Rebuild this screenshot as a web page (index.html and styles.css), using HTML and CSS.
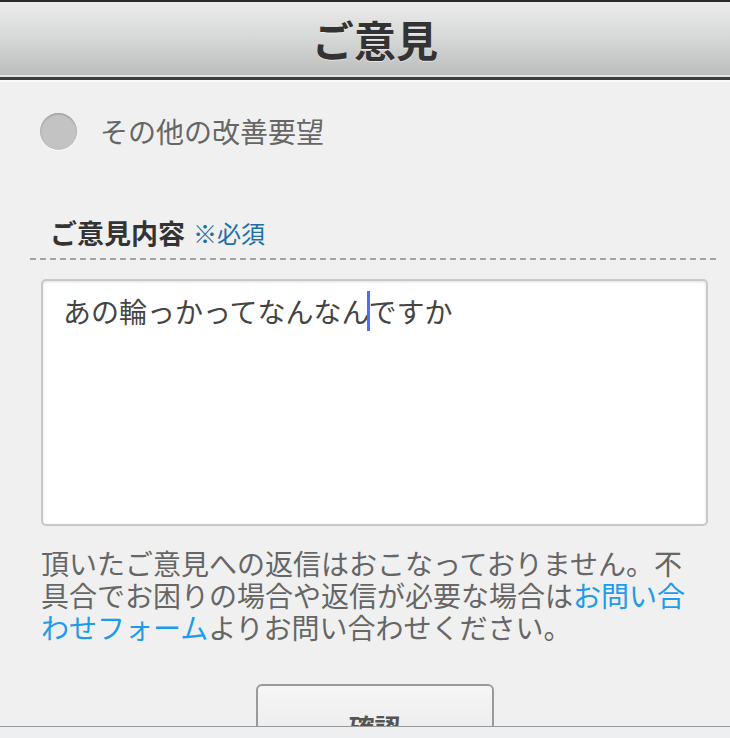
FILE: index.html
```html
<!DOCTYPE html>
<html lang="ja">
<head>
<meta charset="utf-8">
<title>ご意見</title>
<link rel="stylesheet" href="styles.css">
</head>
<body>
<header class="header">
  <h1 class="title">ご意見</h1>
</header>
<div class="rule rule-light"></div>
<div class="rule rule-dark"></div>
<div class="rule rule-white"></div>

<main class="main">
  <label class="option">
    <span class="radio"></span>
    <span class="option-text">その他の改善要望</span>
  </label>

  <div class="field-label">
    <span class="field-name">ご意見内容</span>
    <span class="required">※必須</span>
  </div>
  <div class="dashed"></div>

  <div class="content">
    <div class="textbox">
      <div class="textbox-text">あの輪っかってなんなん<span class="caret"></span>ですか</div>
    </div>
    <p class="note">頂いたご意見への返信はおこなっておりません。不具合でお困りの場合や返信が必要な場合は<a class="link" href="#">お問い合わせフォーム</a>よりお問い合わせください。</p>
    <div class="actions">
      <button class="button" type="button">確認</button>
    </div>
  </div>
</main>

<footer class="footer"></footer>
</body>
</html>
```
FILE: styles.css
```css
html, body {
  margin: 0;
  padding: 0;
}
body {
  background: #f0f0f0;
  font-family: "Noto Sans CJK JP", "Noto Sans", sans-serif;
  color: #333;
  min-height: 738px;
}
.header {
  border-top: 2px solid #2a2a2a;
  height: 73px;
  background: linear-gradient(to bottom, #ececec 0%, #d6d7d7 50%, #bcbdbd 100%);
  display: flex;
  align-items: center;
  justify-content: center;
}
.title {
  margin: 0 0 0 20px;
  font-size: 42px;
  font-weight: bold;
  line-height: 73px;
  color: #333;
  text-shadow: 0 1px 0 rgba(255,255,255,0.5);
}
.rule { height: 2px; }
.rule-light { background: #e4e4e4; }
.rule-dark { background: #3c3c3c; height: 3px; }
.rule-white { background: #fafafa; }

.main {
  padding-top: 30px;
}
.option {
  display: flex;
  align-items: center;
  margin-left: 40px;
  height: 38px;
  gap: 23px;
}
.radio {
  width: 37px;
  height: 37px;
  border-radius: 50%;
  background: #c3c3c3;
  box-shadow: inset 0 1px 2px rgba(0,0,0,0.25), 0 1px 1px #ffffff;
  flex: none;
}
.option-text {
  font-size: 28px;
  color: #666;
  line-height: 38px;
  margin-top: -1px;
}
.field-label {
  margin-top: 68px;
  padding-left: 50px;
  height: 30px;
  line-height: 30px;
  display: flex;
  align-items: center;
  gap: 8px;
}
.field-name {
  font-size: 27px;
  font-weight: bold;
  color: #333;
}
.required {
  font-size: 24px;
  color: #1f6fa8;
}
.dashed {
  margin: 10px 12px 0 30px;
  height: 2px;
  background: repeating-linear-gradient(to right, #a2a2a2 0 6px, transparent 6px 10px);
}
.content {
  margin: 0 22px 0 41px;
}
.textbox {
  margin-top: 19px;
  height: 243px;
  border: 2px solid #c8c8c8;
  border-radius: 5px;
  background: #fff;
  box-shadow: inset 0 1px 3px rgba(0,0,0,0.12);
}
.textbox-text {
  padding: 10px 20px;
  font-size: 28px;
  line-height: 40px;
  color: #444;
}
.caret {
  display: inline-block;
  width: 3px;
  height: 40px;
  background: #4f6ef5;
  vertical-align: top;
  margin: 0 -1px 0 -3px;
}
.note {
  margin: 21px 0 0;
  font-size: 28px;
  line-height: 32px;
  color: #666;
}
.link {
  color: #1e9be9;
  text-decoration: none;
}
.actions {
  display: flex;
  justify-content: center;
  margin-top: 41px;
}
.button {
  width: 238px;
  height: 84px;
  border: 2px solid #9a9a9a;
  border-radius: 6px;
  background: linear-gradient(to bottom, #f6f6f6, #e6e6e6);
  font-family: "Noto Sans CJK JP", sans-serif;
  font-size: 26px;
  font-weight: bold;
  color: #555;
  padding: 0;
}
.footer {
  position: fixed;
  left: 0;
  right: 0;
  bottom: 0;
  height: 11px;
  border-top: 1px solid #999;
  background: #eeeff1;
}
```
